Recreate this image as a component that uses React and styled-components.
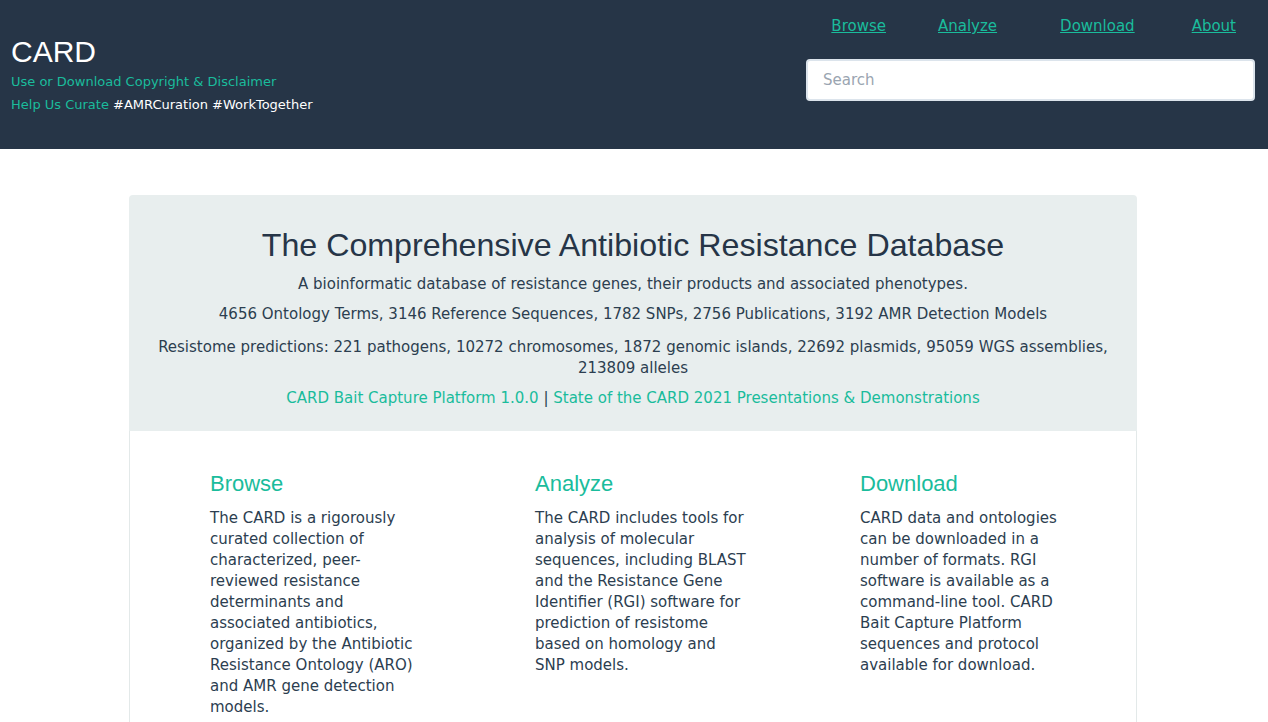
import React from "react";
import styled, { createGlobalStyle } from "styled-components";

const GlobalStyle = createGlobalStyle`
  body {
    margin: 0;
    background: #ffffff;
    font-family: "DejaVu Sans", Verdana, sans-serif;
    color: #2c3e50;
  }
  * { box-sizing: border-box; }
`;

const Header = styled.header`
  height: 149px;
  background: #263547;
  display: flex;
  justify-content: space-between;
  padding: 0 13px 0 11px;
`;

const Brand = styled.div`
  padding-top: 34px;
`;

const Logo = styled.div`
  font-family: "Liberation Sans", Arial, sans-serif;
  font-size: 30px;
  line-height: 36px;
  color: #ffffff;
`;

const SmallLine = styled.div`
  font-size: 13px;
  line-height: 23px;
  color: #ffffff;
`;

const GreenLink = styled.a`
  color: #1abc9c;
  text-decoration: none;
`;

const RightCol = styled.div`
  width: 449px;
  display: flex;
  flex-direction: column;
  align-items: flex-end;
`;

const Nav = styled.nav`
  display: flex;
  padding: 16px 19px 0 0;
  height: 59px;
`;

const NavLink = styled.a`
  font-size: 15px;
  line-height: 20px;
  color: #1abc9c;
  text-decoration: underline;
  margin-left: ${(p) => p.$ml ?? 0}px;
`;

const Search = styled.input`
  width: 100%;
  height: 42px;
  border: 2px solid #dce4ec;
  border-radius: 4px;
  padding: 0 15px;
  font-family: "DejaVu Sans", Verdana, sans-serif;
  font-size: 15px;
  color: #2c3e50;
  outline: none;
  &::placeholder { color: #9aa5b1; }
`;

const Main = styled.main`
  width: 1008px;
  margin: 46px auto 0;
  position: relative;
  left: -1px;
`;

const Jumbo = styled.section`
  background: #e8eeee;
  border-radius: 4px 4px 0 0;
  padding: 32px 20px 22px;
  text-align: center;
`;

const Title = styled.h1`
  font-family: "Liberation Sans", Arial, sans-serif;
  font-weight: 400;
  font-size: 32.2px;
  line-height: 36px;
  margin: 0 0 11px;
  color: #263547;
`;

const Lead = styled.p`
  font-size: ${(p) => (p.$condensed ? 16.7 : 15)}px;
  line-height: 21px;
  margin: 0 0 ${(p) => p.$mb ?? 10}px;
  font-family: ${(p) => (p.$condensed ? '"DejaVu Sans Condensed", "DejaVu Sans", sans-serif' : '"DejaVu Sans", Verdana, sans-serif')};
`;

const Panel = styled.section`
  border: 1px solid #e3e9e9;
  border-top: none;
  padding: 39px 0 40px 80px;
  display: grid;
  grid-template-columns: repeat(3, 215px);
  column-gap: 110px;
`;

const Col = styled.div``;

const ColTitle = styled.h2`
  font-family: "Liberation Sans", Arial, sans-serif;
  font-weight: 400;
  font-size: 22px;
  line-height: 28px;
  color: #1abc9c;
  margin: 0 0 10px;
`;

const ColText = styled.p`
  font-size: 15px;
  line-height: 21px;
  margin: 0;
`;

const columns = [
  {
    title: "Browse",
    text: "The CARD is a rigorously curated collection of characterized, peer-reviewed resistance determinants and associated antibiotics, organized by the Antibiotic Resistance Ontology (ARO) and AMR gene detection models.",
  },
  {
    title: "Analyze",
    text: "The CARD includes tools for analysis of molecular sequences, including BLAST and the Resistance Gene Identifier (RGI) software for prediction of resistome based on homology and SNP models.",
  },
  {
    title: "Download",
    text: "CARD data and ontologies can be downloaded in a number of formats. RGI software is available as a command-line tool. CARD Bait Capture Platform sequences and protocol available for download.",
  },
];

const App = () => {
  return (
    <>
      <GlobalStyle />
      <Header>
        <Brand>
          <Logo>CARD</Logo>
          <SmallLine>
            <GreenLink>Use or Download Copyright &amp; Disclaimer</GreenLink>
          </SmallLine>
          <SmallLine>
            <GreenLink>Help Us Curate</GreenLink> #AMRCuration #WorkTogether
          </SmallLine>
        </Brand>
        <RightCol>
          <Nav>
            <NavLink>Browse</NavLink>
            <NavLink $ml={52}>Analyze</NavLink>
            <NavLink $ml={63}>Download</NavLink>
            <NavLink $ml={57}>About</NavLink>
          </Nav>
          <Search placeholder="Search" />
        </RightCol>
      </Header>
      <Main>
        <Jumbo>
          <Title>The Comprehensive Antibiotic Resistance Database</Title>
          <Lead $mb={9}>A bioinformatic database of resistance genes, their products and associated phenotypes.</Lead>
          <Lead $mb={11}>4656 Ontology Terms, 3146 Reference Sequences, 1782 SNPs, 2756 Publications, 3192 AMR Detection Models</Lead>
          <Lead $condensed>
            Resistome predictions: 221 pathogens, 10272 chromosomes, 1872 genomic islands, 22692 plasmids, 95059 WGS assemblies, 213809 alleles
          </Lead>
          <Lead $mb={0}>
            <GreenLink>CARD Bait Capture Platform 1.0.0</GreenLink> | <GreenLink>State of the CARD 2021 Presentations &amp; Demonstrations</GreenLink>
          </Lead>
        </Jumbo>
        <Panel>
          {columns.map((c) => (
            <Col key={c.title}>
              <ColTitle>{c.title}</ColTitle>
              <ColText>{c.text}</ColText>
            </Col>
          ))}
        </Panel>
      </Main>
    </>
  );
};

export default App;
